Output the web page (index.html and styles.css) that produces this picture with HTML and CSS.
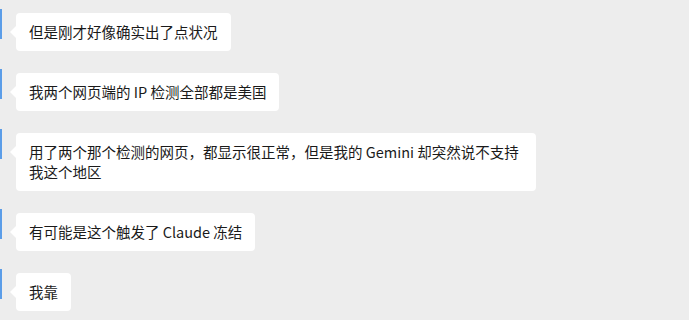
FILE: index.html
```html
<!DOCTYPE html>
<html lang="zh-CN">
<head>
    <meta charset="UTF-8">
    <meta name="viewport" content="width=device-width, initial-scale=1.0">
    <title>聊天记录</title>
    <link rel="stylesheet" href="styles.css">
</head>
<body>
    <div class="chat">
        <div class="msg">
            <div class="avatar"></div>
            <div class="bubble">但是刚才好像确实出了点状况</div>
        </div>
        <div class="msg">
            <div class="avatar"></div>
            <div class="bubble">我两个网页端的 IP 检测全部都是美国</div>
        </div>
        <div class="msg">
            <div class="avatar"></div>
            <div class="bubble">用了两个那个检测的网页，都显示很正常，但是我的 Gemini 却突然说不支持我这个地区</div>
        </div>
        <div class="msg">
            <div class="avatar"></div>
            <div class="bubble">有可能是这个触发了 Claude 冻结</div>
        </div>
        <div class="msg">
            <div class="avatar"></div>
            <div class="bubble">我靠</div>
        </div>
    </div>
</body>
</html>
```

FILE: styles.css
```css
body {
    margin: 0;
    padding: 0;
    background-color: #ededed;
    font-family: "Noto Sans CJK SC", "Liberation Sans", sans-serif;
    color: #1a1a1a;
}

.chat {
    display: flex;
    flex-direction: column;
    gap: 22px;
    padding-top: 13px;
}

.msg {
    display: flex;
    align-items: flex-start;
    gap: 14px;
}

.avatar {
    width: 2px;
    height: 30px;
    margin-top: -4px;
    background-color: #5b9de8;
    flex-shrink: 0;
}

.bubble {
    position: relative;
    background-color: #fff;
    border-radius: 4px;
    padding: 9px 13px;
    max-width: 494px;
    font-size: 14.5px;
    line-height: 20px;
}

/* little tail pointing at the avatar */
.bubble::before {
    content: "";
    position: absolute;
    left: -6px;
    top: 13px;
    border-top: 6px solid transparent;
    border-bottom: 6px solid transparent;
    border-right: 6px solid #fff;
}
```
